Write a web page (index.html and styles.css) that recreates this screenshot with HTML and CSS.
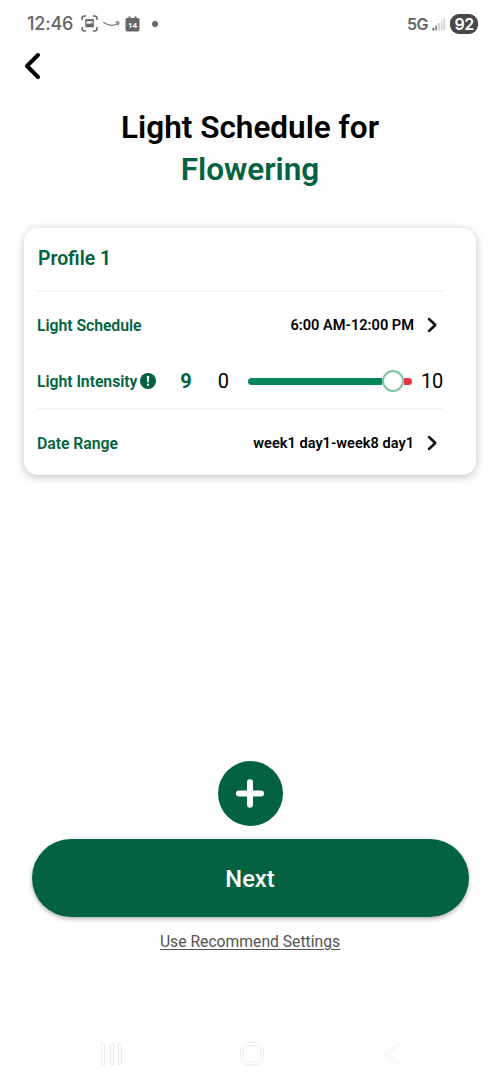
FILE: index.html
```html
<!DOCTYPE html>
<html lang="en">
<head>
<meta charset="utf-8">
<title>Light Schedule</title>
<link rel="stylesheet" href="styles.css">
</head>
<body>
<div class="screen">
  <div class="status">
    <span class="clock">12:46</span>
    <svg class="ic-capture" width="17" height="17" viewBox="0 0 17 17" fill="none" stroke="#666" stroke-width="1.5" stroke-linecap="round"><path d="M1 4.500V3.500Q1 1 3.500 1H4.500M12.500 1h1Q16 1 16 3.500V4.500M16 12.500v1Q16 16 13.500 16H12.500M4.500 16H3.500Q1 16 1 13.500V12.500"/><path d="M5 5h7.200v6.600H5z" stroke-width="1.300" stroke-linejoin="round"/><path d="M5 11.200V9.800l2-1.600 1.600 1 1.600-1.400 2 1.800v1.600z" fill="#666" stroke="none"/><path d="M5 5.300h7" stroke-width="1.800"/></svg>
    <svg class="ic-smile" width="17" height="6" viewBox="0 0 17 6" fill="none" stroke="#777" stroke-width="1.300" stroke-linecap="round"><path d="M.8 1.500Q7.500 6.500 14.500 2.700M13 1.300q2.500-.7 2.800 0t-.8 2.500"/></svg>
    <svg class="ic-cal" width="15" height="16" viewBox="0 0 15 16"><path d="M2 2h1.500V.5h2V2h4V.5h2V2H13q1.500 0 1.500 1.500v10q0 2-2 2h-10q-2 0-2-2v-10Q.5 2 2 2z" fill="#666"/><text class="cal-day" x="7.500" y="11.500">14</text></svg>
    <span class="dot"></span>
    <span class="network">5G</span>
    <svg class="ic-signal" width="14" height="14" viewBox="0 0 14 14"><path d="M.5 11h1.800v2.500H.5z" fill="#555"/><path d="M3.300 8.500h1.800v5H3.300z" fill="#888"/><path d="M6.100 6h1.800v7.500H6.100zM8.900 3.500h1.600v10H8.900zM11.500 1h1.600v12.500h-1.600z" fill="#d0d0d0"/></svg>
    <span class="battery">92</span>
  </div>
  <div class="topbar">
    <svg width="18" height="28" viewBox="0 0 18 28" fill="none" stroke="#000" stroke-width="4" stroke-linecap="round" stroke-linejoin="round"><path d="M15 3L4 14l11 11"/></svg>
  </div>
  <h1 class="title">Light Schedule for<br><span class="stage">Flowering</span></h1>
  <section class="card">
    <h2 class="profile">Profile 1</h2>
    <div class="row row-schedule">
      <span class="label">Light Schedule</span>
      <span class="value">6:00 AM-12:00 PM</span>
      <svg class="chevron" width="11" height="16" viewBox="0 0 11 16"><path d="M2 2l6.300 6L2 14"/></svg>
    </div>
    <div class="row row-intensity">
      <span class="label">Light Intensity</span>
      <svg class="info" width="16" height="16" viewBox="0 0 16 16"><circle cx="8" cy="8" r="8" fill="#03623f"/><path d="M6.800 3h2.400L8.800 9.300H7.200z" fill="#fff"/><circle cx="8" cy="11.700" r="1.200" fill="#fff"/></svg>
      <span class="level">9</span>
      <span class="bound bound-min">0</span>
      <div class="slider"><div class="fill"></div><div class="thumb"></div><div class="rest"></div></div>
      <span class="bound">10</span>
    </div>
    <div class="row row-range">
      <span class="label">Date Range</span>
      <span class="value">week1 day1-week8 day1</span>
      <svg class="chevron" width="11" height="16" viewBox="0 0 11 16"><path d="M2 2l6.300 6L2 14"/></svg>
    </div>
  </section>
  <div class="actions">
    <div class="add"><svg width="28" height="29" viewBox="0 0 28 29" stroke="#fff" stroke-width="6" stroke-linecap="round"><path d="M14 3.300v22.400M3 14.500h22"/></svg></div>
    <div class="next">Next</div>
    <div class="recommend">Use Recommend Settings</div>
  </div>
  <div class="nav">
    <svg width="24" height="24" viewBox="0 0 24 24" fill="none" stroke="#ededed"><path d="M1.500 1.500h3v21h-3zM10.500 1.500h3v21h-3zM18.500 1.500h3v21h-3z"/></svg>
    <svg class="home" width="26" height="24" viewBox="0 0 26 24" fill="none" stroke="#ededed"><rect x="1.500" y=".5" width="23" height="22.500" rx="8"/><rect x="4.500" y="3.500" width="17" height="16.500" rx="5.500"/></svg>
    <svg width="18" height="24" viewBox="0 0 18 24" fill="none" stroke="#ededed" stroke-linejoin="round"><path d="M14.500 1L1 12l13.500 11 2-2L5.500 12l11-9z"/></svg>
  </div>
</div>
</body>
</html>
```
FILE: styles.css
```css
body {
  margin: 0;
  background: #fefefe;
  font-family: Roboto, "Liberation Sans", sans-serif;
}
.screen {
  width: 500px;
  height: 1084px;
  display: flex;
  flex-direction: column;
  overflow: hidden;
}
.status {
  height: 47px;
  padding: 0 22px 0 27px;
  display: flex;
  align-items: center;
  color: #666;
}
.clock {
  width: 54px;
  font: 500 18px/20px Inter, Roboto, sans-serif;
  letter-spacing: -0.2px;
}
.ic-smile { margin-left: 5px; }
.ic-cal { margin-left: 5px; }
.cal-day {
  font: 700 8px Roboto, sans-serif;
  fill: #fff;
  text-anchor: middle;
}
.dot {
  width: 6px;
  height: 6px;
  margin-left: 12px;
  border-radius: 50%;
  background: #666;
}
.network {
  margin-left: auto;
  font: 600 16px/20px Inter, Roboto, sans-serif;
  letter-spacing: -0.5px;
}
.ic-signal { margin: 0 4px 0 4px; }
.battery {
  width: 28px;
  height: 20px;
  border-radius: 9px;
  background: #484848;
  color: #fff;
  font: 600 16px/20px Inter, Roboto, sans-serif;
  letter-spacing: -0.5px;
  text-align: center;
}
.topbar {
  height: 60px;
  padding: 5px 0 0 23px;
  box-sizing: border-box;
}
.topbar svg { display: block; }
.title {
  margin: 0;
  font-size: 31.5px;
  font-weight: 600;
  line-height: 42px;
  text-align: center;
}
.stage { color: #03623f; }
.card {
  width: 452px;
  height: 247px;
  box-sizing: border-box;
  margin: 37px 24px 0;
  padding: 0 33px 0 13px;
  border-radius: 14px;
  background: #fff;
  box-shadow: 0 2px 8px rgba(0, 0, 0, 0.24);
}
.profile {
  margin: 0;
  padding-left: 1px;
  height: 62px;
  border-bottom: 2px solid #f5f5f5;
  color: #03623f;
  font-size: 19.4px;
  font-weight: 600;
  line-height: 61px;
}
.row {
  display: flex;
  align-items: center;
}
.row-schedule { height: 66px; }
.row-intensity {
  height: 46px;
  padding-bottom: 4px;
  border-bottom: 2px solid #f5f5f5;
}
.row-range { height: 66px; }
.label {
  color: #03623f;
  font-size: 15.8px;
  font-weight: 600;
  letter-spacing: -0.05px;
  white-space: nowrap;
}
.value {
  margin-left: auto;
  font-size: 14.6px;
  font-weight: 600;
}
.chevron {
  margin: 0 5px 0 13px;
  fill: none;
  stroke: #111;
  stroke-width: 2.5;
  stroke-linecap: round;
  stroke-linejoin: round;
}
.info { margin-left: 3px; }
.level {
  margin-left: 24px;
  color: #03623f;
  font-size: 20px;
  font-weight: 700;
}
.bound {
  font-size: 20px;
  letter-spacing: -0.3px;
}
.bound-min { margin-left: 26px; }
.slider {
  width: 164px;
  margin: 0 9px 0 auto;
  display: flex;
  align-items: center;
}
.fill {
  width: 134px;
  height: 7px;
  border-radius: 4px 0 0 4px;
  background: #07875e;
}
.thumb {
  width: 22px;
  height: 22px;
  box-sizing: border-box;
  border: 2px solid #7cc5a2;
  border-radius: 50%;
  background: #fff;
}
.rest {
  flex: 1;
  height: 7px;
  border-radius: 0 4px 4px 0;
  background: #e8354f;
}
.actions {
  margin-top: 286px;
  display: flex;
  flex-direction: column;
  align-items: center;
}
.add {
  width: 65px;
  height: 65px;
  display: flex;
  align-items: center;
  justify-content: center;
  border-radius: 50%;
  background: #03623f;
}
.next {
  width: 437px;
  height: 78px;
  margin-top: 13px;
  border-radius: 39px;
  background: #03623f;
  box-shadow: 0 2px 4px rgba(0, 0, 0, 0.3);
  color: #fff;
  font-size: 23.7px;
  font-weight: 500;
  line-height: 80px;
  text-align: center;
}
.recommend {
  margin-top: 15px;
  color: #555;
  font-size: 15.7px;
  line-height: 20px;
  text-decoration: underline;
  text-decoration-thickness: 1px;
  text-underline-offset: 2px;
}
.nav {
  margin-top: auto;
  padding: 0 99px 18px 100px;
  display: flex;
  justify-content: space-between;
}
.home { margin-right: 4px; }
```
